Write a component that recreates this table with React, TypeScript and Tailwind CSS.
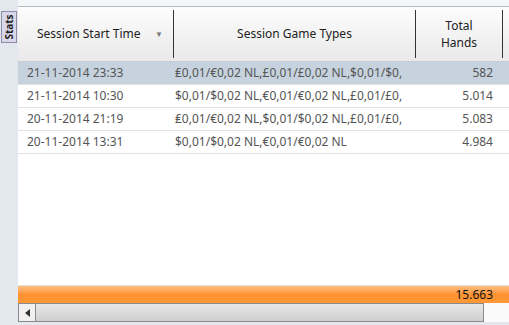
import React from "react"

const ROWS = [
  { start: "21-11-2014 23:33", types: "₤0,01/€0,02 NL,£0,01/£0,02 NL,$0,01/$0,", hands: "582", selected: true },
  { start: "21-11-2014 10:30", types: "$0,01/$0,02 NL,€0,01/€0,02 NL,£0,01/£0,", hands: "5.014" },
  { start: "20-11-2014 21:19", types: "₤0,01/€0,02 NL,$0,01/$0,02 NL,£0,01/£0,", hands: "5.083" },
  { start: "20-11-2014 13:31", types: "$0,01/$0,02 NL,€0,01/€0,02 NL", hands: "4.984" },
]

export default function App() {
  return (
    <div
      className="w-[509px] h-[325px] flex bg-[#e3e8ef] overflow-hidden text-[12px]"
      style={{ fontFamily: '"Noto Sans", "Open Sans", sans-serif' }}
    >
      {/* side strip with the Stats tab */}
      <div className="w-[18px] shrink-0 pt-[11px] pl-[1px]">
        <div className="w-[16px] h-[32px] bg-[#d9d7ea] border border-[#8f8ca8] flex items-center justify-center">
          <span className="-rotate-90 text-[10px] font-bold text-[#222] leading-none">Stats</span>
        </div>
      </div>

      {/* grid */}
      <div className="flex-1 flex flex-col bg-white">
        <div className="h-[7px] bg-[#f5f6f8] border-b border-[#b8bcc4]" />

        {/* header */}
        <div className="h-[55px] flex bg-gradient-to-b from-[#fdfdfd] to-[#e9e9e9] border-b border-[#c8ccd2] text-[#222]">
          <div className="w-[156px] flex items-center pl-[19px] pr-[10px] border-r border-[#333] my-[3px]">
            <span className="flex-1">Session Start Time</span>
            <span className="text-[8px] text-[#777]">▼</span>
          </div>
          <div className="w-[242px] flex items-center justify-center border-r border-[#333] my-[3px]">
            Session Game Types
          </div>
          <div className="w-[87px] flex items-center justify-center text-center leading-[17px] border-r border-[#333] my-[3px]">
            Total<br />Hands
          </div>
          <div className="flex-1" />
        </div>

        {/* rows */}
        <div className="flex-1 text-[#555]">
          {ROWS.map((r, i) => (
            <div
              key={i}
              className={`h-[23px] flex items-center border-b border-[#e2e2e2] ${r.selected ? "bg-[#c6d3de]" : ""}`}
            >
              <div className="w-[156px] pl-[9px] whitespace-nowrap overflow-hidden">{r.start}</div>
              <div className="w-[242px] pl-[1px] whitespace-nowrap overflow-hidden">{r.types}</div>
              <div className="w-[87px] pr-[10px] text-right">{r.hands}</div>
            </div>
          ))}
        </div>

        {/* totals */}
        <div className="h-[18px] flex items-center justify-end pr-[16px] bg-gradient-to-b from-[#ffbe80] via-[#ff9330] to-[#ff9838] border-t border-[#e0e0e0] text-[#111]">
          15.663
        </div>

        {/* horizontal scrollbar */}
        <div className="h-[19px] flex bg-[#fafafa]">
          <div className="w-[466px] flex border border-[#8a8a8a] bg-gradient-to-b from-[#e8e8e8] to-[#cfcfcf]">
            <div className="w-[17px] flex items-center justify-center border-r border-[#8a8a8a] bg-[#f0f0f0]">
              <svg width="5" height="8" viewBox="0 0 5 8">
                <path d="M5 0 L0 4 L5 8 Z" fill="#333" />
              </svg>
            </div>
            <div className="flex-1" />
          </div>
        </div>
        <div className="h-[3px] bg-[#e3e8ef]" />
      </div>
    </div>
  )
}
